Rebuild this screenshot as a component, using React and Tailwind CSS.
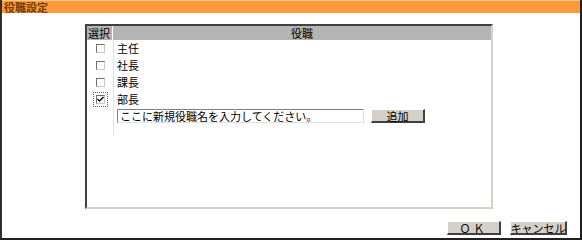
import { useState } from 'react';

const font = { fontFamily: '"Noto Sans CJK JP", "MS PGothic", sans-serif' };

function Check({ checked, focused }) {
    return (
        <div className={`flex items-center justify-center w-[15px] h-[15px] ${focused ? 'border border-dotted border-[#606060]' : ''}`}>
            <div className="w-[9px] h-[9px] bg-white border-t border-l border-[#707070] border-r border-b border-r-[#c8c8c8] border-b-[#c8c8c8] flex items-center justify-center">
                {checked && (
                    <svg width="7" height="7" viewBox="0 0 7 7">
                        <path d="M0.5 3 L2.5 5 L6.5 1" stroke="#000" strokeWidth="1.4" fill="none" />
                    </svg>
                )}
            </div>
        </div>
    );
}

function Btn({ children, className = 'w-[54px]' }) {
    return (
        <button
            className={`h-[14px] bg-[#d4d0c8] border-t border-l border-white border-r-2 border-b-2 border-r-[#404040] border-b-[#404040] text-[11px] leading-[10px] text-black whitespace-nowrap flex items-center justify-center ${className}`}
        >
            {children}
        </button>
    );
}

export default function App() {
    const [roles, setRoles] = useState([
        { name: '主任', checked: false },
        { name: '社長', checked: false },
        { name: '課長', checked: false },
        { name: '部長', checked: true },
    ]);

    const toggle = (i) =>
        setRoles(roles.map((r, idx) => (idx === i ? { ...r, checked: !r.checked } : r)));

    return (
        <div style={font} className="w-[582px] h-[240px] bg-white flex flex-col border-l-2 border-r-2 border-b-2 border-[#202020] border-l-[#303030]">
            {/* Title bar */}
            <div className="h-[13px] bg-[#ff9a3a] border-t border-[#ffc890] flex items-center pl-[2px]">
                <span className="text-[11px] leading-[12px] font-bold text-[#7a3a00]">役職設定</span>
            </div>

            {/* List box */}
            <div className="mt-[11px] ml-[83px] w-[408px] h-[185px] border-t-2 border-l-2 border-t-[#404040] border-l-[#404040] border-r-2 border-b-2 border-r-[#d4d0c8] border-b-[#d4d0c8] bg-white">
                <div className="flex h-[14px] bg-[#b4b4b4] text-[11px] leading-[14px] text-black">
                    <div className="w-[26px] pl-[1px] border-r border-white">選択</div>
                    <div className="flex-1 text-center">役職</div>
                </div>
                <div className="flex">
                    <div className="w-[27px] border-r border-[#e0e0e0] flex flex-col items-center pb-[6px]">
                        {roles.map((r, i) => (
                            <div key={r.name} className="h-[17px] flex items-center cursor-pointer" onClick={() => toggle(i)}>
                                <Check checked={r.checked} focused={i === 3} />
                            </div>
                        ))}
                        <div className="h-[22px]" />
                    </div>
                    <div className="flex-1 flex flex-col pl-[3px] text-[11px] text-black">
                        {roles.map((r) => (
                            <div key={r.name} className="h-[17px] flex items-center leading-[17px]">{r.name}</div>
                        ))}
                        <div className="h-[22px] flex items-start pt-[1px] gap-[7px]">
                            <div className="w-[247px] h-[14px] border-t border-l border-[#808080] border-r border-b border-r-[#e0e0e0] border-b-[#e0e0e0] pl-[2px] text-[11px] leading-[12px] text-black whitespace-nowrap overflow-hidden">
                                ここに新規役職名を入力してください。
                            </div>
                            <Btn>追加</Btn>
                        </div>
                    </div>
                </div>
            </div>

            {/* Bottom buttons */}
            <div className="flex justify-end gap-[9px] mt-[12px] pr-[13px]">
                <Btn className="w-[54px] tracking-[3px]">ＯＫ</Btn>
                <Btn className="w-[57px]">キャンセル</Btn>
            </div>
        </div>
    );
}
